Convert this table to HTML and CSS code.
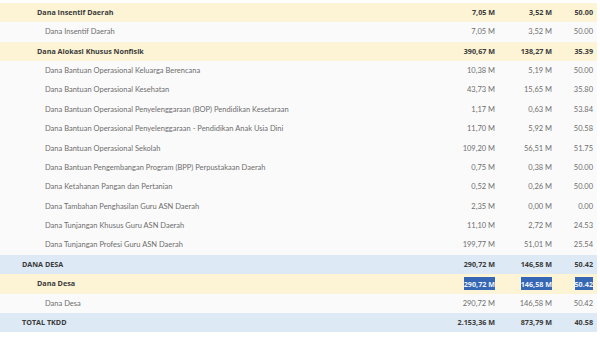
FILE: index.html
```html
<!DOCTYPE html>
<html>
<head>
<meta charset="utf-8">
<link rel="stylesheet" href="styles.css">
</head>
<body>
<div class="table">
  <div class="row group"><div class="name l1">Dana Insentif Daerah</div><div class="num">7,05 M</div><div class="num">3,52 M</div><div class="num">50.00</div></div>
  <div class="row item"><div class="name l2">Dana Insentif Daerah</div><div class="num">7,05 M</div><div class="num">3,52 M</div><div class="num">50.00</div></div>
  <div class="row group"><div class="name l1">Dana Alokasi Khusus Nonfisik</div><div class="num">390,67 M</div><div class="num">138,27 M</div><div class="num">35.39</div></div>
  <div class="row item"><div class="name l2">Dana Bantuan Operasional Keluarga Berencana</div><div class="num">10,38 M</div><div class="num">5,19 M</div><div class="num">50.00</div></div>
  <div class="row item"><div class="name l2">Dana Bantuan Operasional Kesehatan</div><div class="num">43,73 M</div><div class="num">15,65 M</div><div class="num">35.80</div></div>
  <div class="row item"><div class="name l2">Dana Bantuan Operasional Penyelenggaraan (BOP) Pendidikan Kesetaraan</div><div class="num">1,17 M</div><div class="num">0,63 M</div><div class="num">53.84</div></div>
  <div class="row item"><div class="name l2">Dana Bantuan Operasional Penyelenggaraan - Pendidikan Anak Usia Dini</div><div class="num">11,70 M</div><div class="num">5,92 M</div><div class="num">50.58</div></div>
  <div class="row item"><div class="name l2">Dana Bantuan Operasional Sekolah</div><div class="num">109,20 M</div><div class="num">56,51 M</div><div class="num">51.75</div></div>
  <div class="row item"><div class="name l2">Dana Bantuan Pengembangan Program (BPP) Perpustakaan Daerah</div><div class="num">0,75 M</div><div class="num">0,38 M</div><div class="num">50.00</div></div>
  <div class="row item"><div class="name l2">Dana Ketahanan Pangan dan Pertanian</div><div class="num">0,52 M</div><div class="num">0,26 M</div><div class="num">50.00</div></div>
  <div class="row item"><div class="name l2">Dana Tambahan Penghasilan Guru ASN Daerah</div><div class="num">2,35 M</div><div class="num">0,00 M</div><div class="num">0.00</div></div>
  <div class="row item"><div class="name l2">Dana Tunjangan Khusus Guru ASN Daerah</div><div class="num">11,10 M</div><div class="num">2,72 M</div><div class="num">24.53</div></div>
  <div class="row item"><div class="name l2">Dana Tunjangan Profesi Guru ASN Daerah</div><div class="num">199,77 M</div><div class="num">51,01 M</div><div class="num">25.54</div></div>
  <div class="row top"><div class="name l0">DANA DESA</div><div class="num">290,72 M</div><div class="num">146,58 M</div><div class="num">50.42</div></div>
  <div class="row group"><div class="name l1">Dana Desa</div><div class="num"><span class="sel">290,72 M</span></div><div class="num"><span class="sel">146,58 M</span></div><div class="num"><span class="sel">50.42</span></div></div>
  <div class="row item"><div class="name l2">Dana Desa</div><div class="num">290,72 M</div><div class="num">146,58 M</div><div class="num">50.42</div></div>
  <div class="row top"><div class="name l0">TOTAL TKDD</div><div class="num">2.153,36 M</div><div class="num">873,79 M</div><div class="num">40.58</div></div>
</div>
</body>
</html>
```
FILE: styles.css
```css
html, body {
  margin: 0;
  padding: 0;
  background: #ffffff;
}
body {
  font-family: "Lato", "Open Sans", sans-serif;
  font-size: 7.5px;
  color: #666666;
}
.table {
  width: 597px;
  padding-top: 3px;
}
.row {
  display: grid;
  grid-template-columns: 1fr 80px 57px 41px;
  padding-right: 4px;
  height: 19.375px;
  align-items: center;
  line-height: 1;
}
.row.group {
  background: #fdf4d6;
  font-family: "Open Sans", "Lato", sans-serif;
  font-weight: 700;
  font-size: 7.2px;
  color: #3a3a3a;
}
.row.item {
  background: #fafafa;
  color: #6e6e6e;
}
.row.top {
  background: #dde9f4;
  font-family: "Open Sans", "Lato", sans-serif;
  font-weight: 700;
  font-size: 7.2px;
  color: #3a3a3a;
}
.name {
  white-space: nowrap;
}
.l0 { padding-left: 22px; }
.l1 { padding-left: 37px; }
.l2 { padding-left: 45px; }
.num {
  text-align: right;
  white-space: nowrap;
}
.sel {
  background: #3567b5;
  color: #eef3fb;
  padding: 1.5px 0;
}
```
